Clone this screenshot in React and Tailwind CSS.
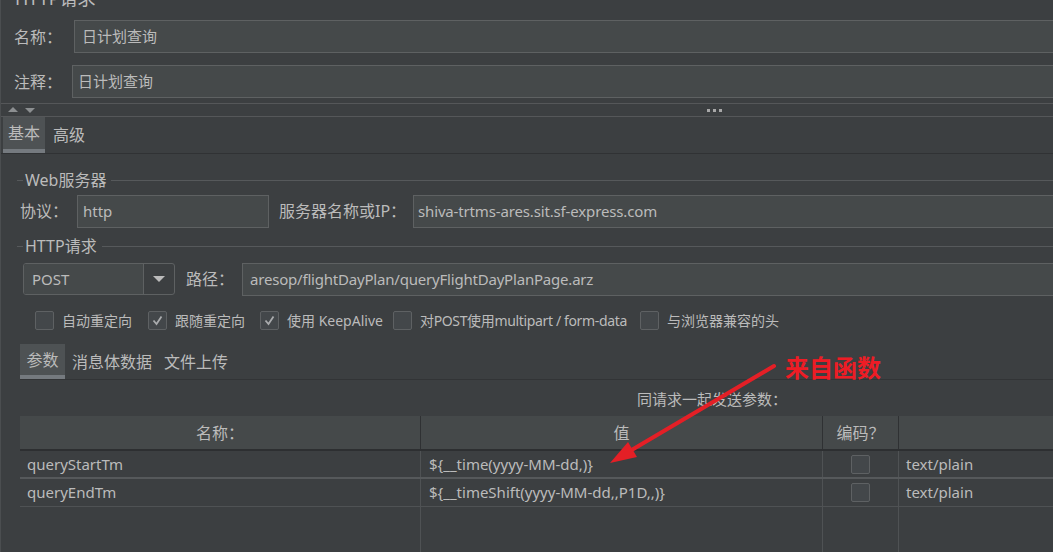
import clsx from 'clsx';

const Field = ({ children, className }) => (
  <div className={clsx('flex h-[33px] items-center border border-[#5e6162] bg-[#45494a] text-[15px] whitespace-nowrap', className)}>
    {children}
  </div>
);

const GroupTitle = ({ children, className }) => (
  <div className={clsx('flex h-[16px] items-center', className)}>
    <div className="ml-[16px] h-px w-[6px] bg-[#56595b]" />
    <span className="ml-[1px] px-[1px] text-[16px] leading-[16px]">{children}</span>
    <div className="ml-[4px] h-px flex-1 bg-[#56595b]" />
  </div>
);

const Box = ({ checked }) => (
  <div className="flex h-[19px] w-[19px] shrink-0 items-center justify-center rounded-[2px] border border-[#5e6163] bg-[#43474a]">
    {checked && (
      <svg width="13" height="13" viewBox="0 0 13 13">
        <polyline points="2.5,6.5 5.5,10 10.5,2.5" fill="none" stroke="#a9abad" strokeWidth="1.8" />
      </svg>
    )}
  </div>
);

const options = [
  { label: '自动重定向', checked: false, w: 'w-[113px]' },
  { label: '跟随重定向', checked: true, w: 'w-[112px]' },
  { label: '使用 KeepAlive', checked: true, w: 'w-[133px]' },
  { label: '对POST使用multipart / form-data', checked: false, w: 'w-[247px]', tight: true },
  { label: '与浏览器兼容的头', checked: false, w: 'w-[200px]' },
];

const params = [
  { name: 'queryStartTm', value: '${__time(yyyy-MM-dd,)}', line: 'border-b-2 border-[#56595b]' },
  { name: 'queryEndTm', value: '${__timeShift(yyyy-MM-dd,,P1D,,)}', line: 'border-b border-[#4f5254]' },
];

const App = () => {
  return (
    <div className="relative flex h-[552px] w-[1053px] flex-col overflow-hidden border-l border-[#4b4e50] bg-[#3c3f41] font-['Noto_Sans','Noto_Sans_CJK_SC',sans-serif] text-[15px] text-[#bbbbbb]">
      <div className="-mt-[12px] h-[20px] pl-[14px] text-[18px] leading-[20px]">HTTP请求</div>

      <div className="mt-[12px] flex h-[33px] items-center">
        <span className="w-[73px] pl-[13px] text-[16px]">名称：</span>
        <Field className="-mr-[10px] flex-1 pl-[7px]">日计划查询</Field>
      </div>
      <div className="mt-[12px] flex h-[33px] items-center">
        <span className="w-[71px] pl-[13px] text-[16px]">注释：</span>
        <Field className="-mr-[10px] flex-1 pl-[5px]">日计划查询</Field>
      </div>

      <div className="mt-[5px] flex h-[14px] items-center border-y border-[#555759]">
        <svg className="ml-[7px]" width="28" height="8" viewBox="0 0 28 8">
          <polygon points="0,6 5,1 10,6" fill="#8c8f91" />
          <polygon points="17,2 27,2 22,7" fill="#8c8f91" />
        </svg>
        <div className="ml-[671px] flex gap-[3px]">
          <div className="h-[3px] w-[3px] bg-[#a8a8a8]" />
          <div className="h-[3px] w-[3px] bg-[#a8a8a8]" />
          <div className="h-[3px] w-[3px] bg-[#a8a8a8]" />
        </div>
      </div>

      <div className="flex h-[37px] border-b border-[#303234] pl-[2px] text-[16px]">
        <div className="flex w-[42px] items-center justify-center border-b-4 border-[#757a7f] bg-[#4e5254]">基本</div>
        <div className="ml-[8px] flex items-center">高级</div>
      </div>

      <GroupTitle className="mt-[18px]">Web服务器</GroupTitle>
      <div className="mt-[7px] flex h-[32px] items-center">
        <span className="ml-[19px] w-[57px] text-[16px]">协议：</span>
        <Field className="h-[32px] w-[192px] pl-[5px]">http</Field>
        <span className="ml-[10px] w-[134px] text-[16px]">服务器名称或IP：</span>
        <Field className="-mr-[10px] h-[32px] flex-1 pl-[4px] tracking-[-0.15px]">shiva-trtms-ares.sit.sf-express.com</Field>
      </div>

      <GroupTitle className="mt-[11px]">HTTP请求</GroupTitle>
      <div className="mt-[9px] flex h-[32px] items-center">
        <div className="ml-[22px] flex h-full w-[152px] overflow-hidden rounded-[3px] border border-[#5e6162]">
          <div className="flex flex-1 items-center border-r border-[#5e6162] bg-[#45494a] pl-[8px]">POST</div>
          <div className="flex w-[30px] items-center justify-center">
            <svg width="12" height="8" viewBox="0 0 12 8">
              <polygon points="0,1 12,1 6,7" fill="#bbbbbb" />
            </svg>
          </div>
        </div>
        <span className="ml-[11px] w-[56px] text-[16px]">路径：</span>
        <Field className="-mr-[10px] h-[32px] flex-1 pl-[7px] tracking-[-0.2px]">aresop/flightDayPlan/queryFlightDayPlanPage.arz</Field>
      </div>

      <div className="mt-[15px] flex h-[20px] items-center pl-[34px] text-[14px]">
        {options.map((o) => (
          <div key={o.label} className={clsx('flex shrink-0 items-center', o.w)}>
            <Box checked={o.checked} />
            <span className={clsx('ml-[8px] whitespace-nowrap', o.tight && 'tracking-[-0.35px]')}>{o.label}</span>
          </div>
        ))}
      </div>

      <div className="mt-[14px] ml-[19px] flex h-[36px] border-b border-[#323436] text-[16px]">
        <div className="flex w-[45px] items-center justify-center border-b-4 border-[#757a7f] bg-[#4e5254]">参数</div>
        <div className="ml-[7px] flex items-center">消息体数据</div>
        <div className="ml-[12px] flex items-center">文件上传</div>
      </div>

      <div className="ml-[19px] flex w-[1384px] flex-1 flex-col">
        <div className="mt-[9px] h-[20px] text-center leading-[20px]">同请求一起发送参数：</div>
        <div className="mt-[7px] grid h-[35px] grid-cols-[401px_402px_76px_1fr] border-b-2 border-[#2d2f31] bg-[#45494a] text-[16px]">
          <div className="flex items-center justify-center border-r border-[#2f3133]">名称：</div>
          <div className="flex items-center justify-center border-r border-[#2f3133]">值</div>
          <div className="flex items-center justify-center border-r border-[#2f3133]">编码？</div>
          <div />
        </div>
        {params.map((p) => (
          <div key={p.name} className={clsx('grid h-[28px] grid-cols-[401px_402px_76px_1fr]', p.line)}>
            <div className="flex items-center border-r border-[#4f5254] pl-[7px]">{p.name}</div>
            <div className="flex items-center border-r border-[#4f5254] pl-[8px]">{p.value}</div>
            <div className="flex items-center justify-center border-r border-[#4f5254]">
              <Box />
            </div>
            <div className="flex items-center pl-[7px]">text/plain</div>
          </div>
        ))}
        <div className="grid flex-1 grid-cols-[401px_402px_76px_1fr]">
          <div className="border-r border-[#4f5254]" />
          <div className="border-r border-[#4f5254]" />
          <div className="border-r border-[#4f5254]" />
          <div />
        </div>
      </div>

      <svg className="pointer-events-none absolute inset-0" width="1053" height="552" viewBox="0 0 1053 552">
        <line x1="773" y1="366" x2="629" y2="451" stroke="#e41f26" strokeWidth="4" strokeLinecap="round" />
        <polygon points="609,463 627,442 636,457" fill="#e41f26" />
      </svg>
      <div className="absolute left-[784px] top-[352px] font-['Noto_Sans_CJK_SC',sans-serif] text-[24px] leading-[30px] font-bold text-[#ee1c25]">
        来自函数
      </div>
    </div>
  );
};

export default App;
